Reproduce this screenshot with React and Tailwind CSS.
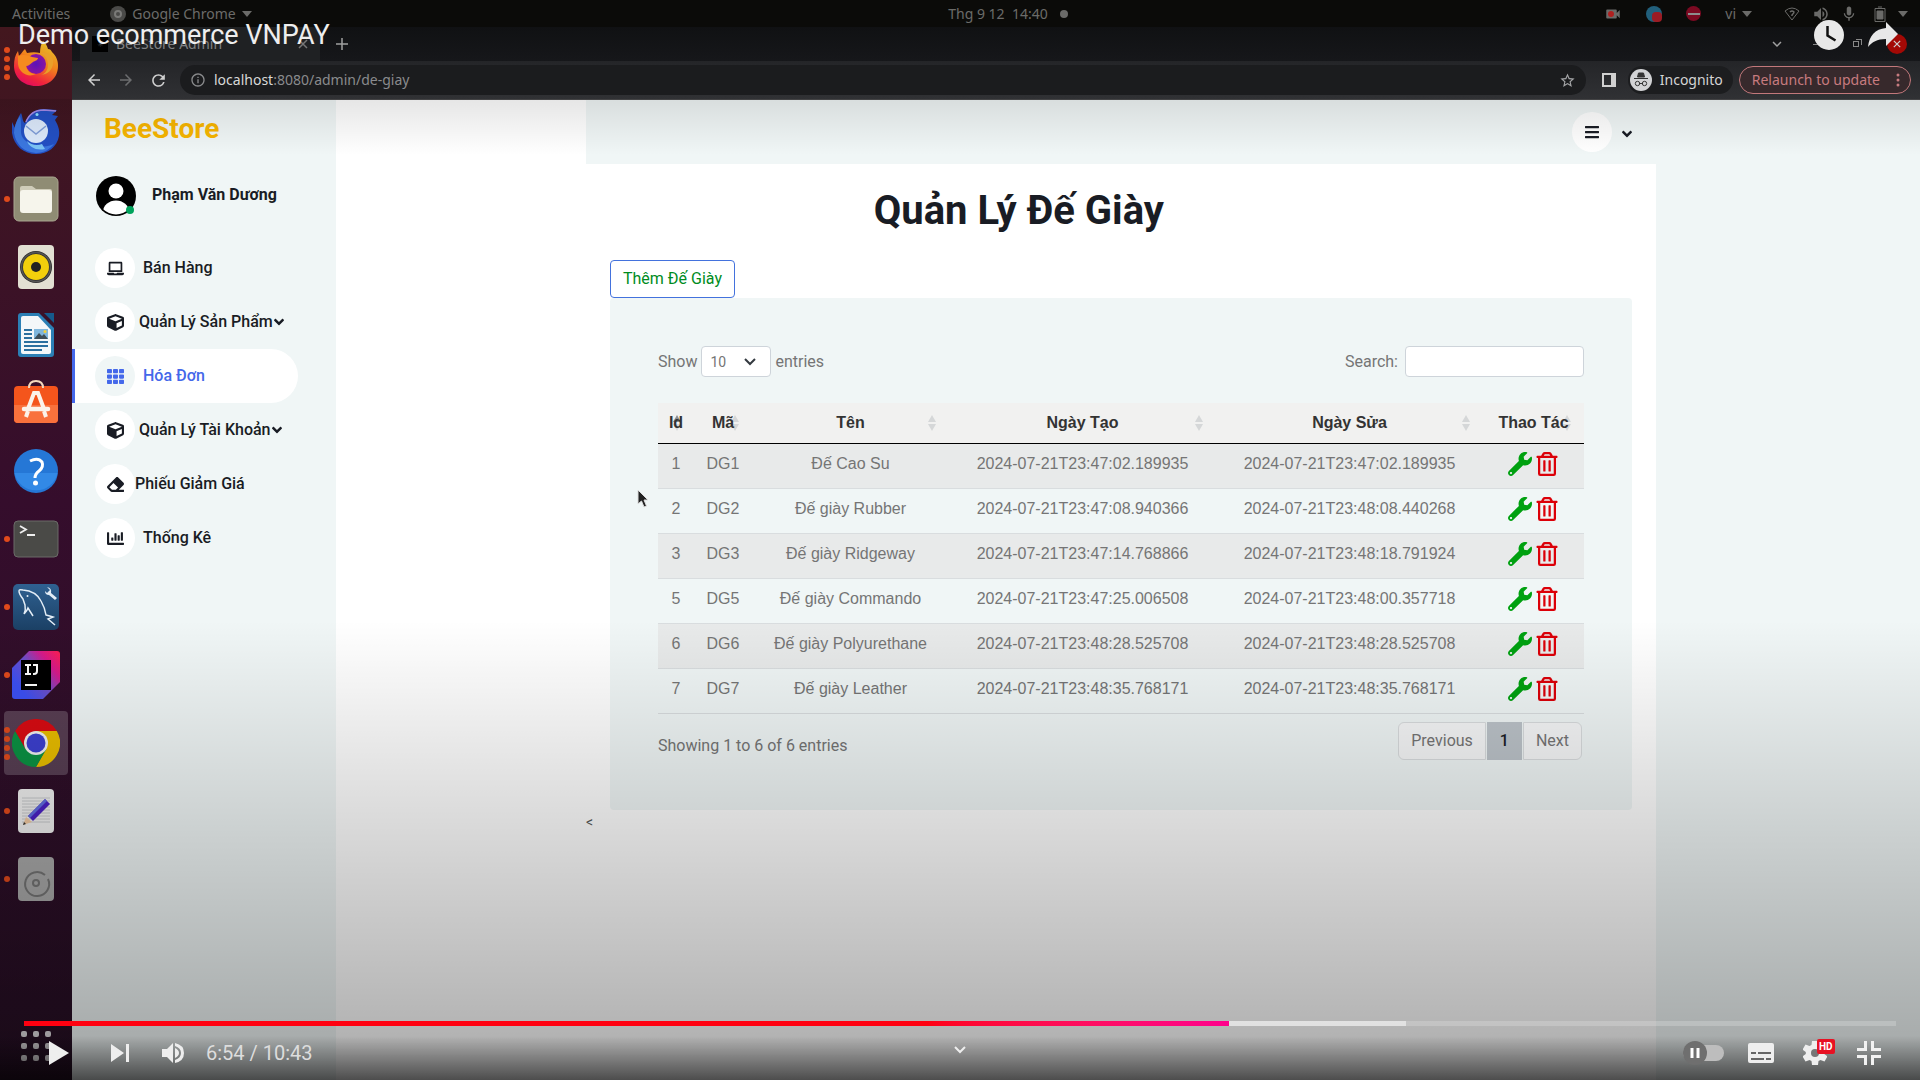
import React from "react";
import {
  FaLaptop,
  FaCube,
  FaTh,
  FaEraser,
  FaChartBar,
  FaBars,
  FaWrench,
  FaRegTrashAlt,
  FaAngleDown,
} from "react-icons/fa";
import { MdArrowBack, MdArrowForward, MdRefresh, MdStarBorder, MdInfoOutline, MdKeyboardArrowDown, MdMic, MdVolumeUp, MdVideocam } from "react-icons/md";

const ROWS = [
  ["1", "DG1", "Đế Cao Su", "2024-07-21T23:47:02.189935", "2024-07-21T23:47:02.189935"],
  ["2", "DG2", "Đế giày Rubber", "2024-07-21T23:47:08.940366", "2024-07-21T23:48:08.440268"],
  ["3", "DG3", "Đế giày Ridgeway", "2024-07-21T23:47:14.768866", "2024-07-21T23:48:18.791924"],
  ["5", "DG5", "Đế giày Commando", "2024-07-21T23:47:25.006508", "2024-07-21T23:48:00.357718"],
  ["6", "DG6", "Đế giày Polyurethane", "2024-07-21T23:48:28.525708", "2024-07-21T23:48:28.525708"],
  ["7", "DG7", "Đế giày Leather", "2024-07-21T23:48:35.768171", "2024-07-21T23:48:35.768171"],
];

const COLUMNS = [
  { label: "Id", width: "w-[36px]" },
  { label: "Mã", width: "w-[58px]" },
  { label: "Tên", width: "w-[197px]" },
  { label: "Ngày Tạo", width: "w-[267px]" },
  { label: "Ngày Sửa", width: "w-[267px]" },
  { label: "Thao Tác", width: "w-[101px]" },
];

/* ---------- dock icons ---------- */

function Firefox() {
  return (
    <svg viewBox="0 0 48 48" className="size-12">
      <defs>
        <linearGradient id="ffBody" x1="0.8" y1="0" x2="0.3" y2="1">
          <stop offset="0" stopColor="#e6c52a" />
          <stop offset="0.45" stopColor="#f0821c" />
          <stop offset="0.8" stopColor="#f0243c" />
          <stop offset="1" stopColor="#e00a60" />
        </linearGradient>
        <radialGradient id="ffCore">
          <stop offset="0" stopColor="#5b12b8" />
          <stop offset="1" stopColor="#8a14a0" />
        </radialGradient>
      </defs>
      <path d="M31 2c3 2 4 5 5 8 2 0 3 1 4 3 4 4 6 8 6 14 0 12-9 20-22 20S2 38 2 27c0-6 1-11 4-15l1 5c2-2 3-4 6-7l2 4c5-1 9-1 13 0 0-5 1-9 3-12z" fill="url(#ffBody)" />
      <circle cx="24" cy="25" r="10" fill="url(#ffCore)" />
      <path d="M6 17c6-2 10-1 14 1l6 1c0 2-3 3-5 4-3 2-4 4-7 4 1 4 4 8 10 8-8 4-17-1-18-10z" fill="#f58a1f" />
      <path d="M28 14c5 2 8 6 8 12 0 5-3 9-7 10 9-1 13-8 12-15-1-5-6-8-13-7z" fill="#e9a02a" />
    </svg>
  );
}

function Thunderbird() {
  return (
    <svg viewBox="0 0 48 48" className="size-12">
      <path d="M9 6c2 4 1 8 4 10 3-8 9-14 19-14l13 1-5 5 6 1-3 4c3 5 5 10 4 16-2 11-11 18-23 18S2 39 0 26V15l3 6c1-6 3-11 6-15z" fill="#2350c4" />
      <path d="M2 26c2 12 10 19 22 20 8 0 14-4 18-9-7 3-14 4-21 1S8 31 9 22c0-5 0-10-1-13-4 5-6 11-6 17z" fill="#3b77e0" />
      <path d="M14 15c3-8 9-12 18-12l12 1" fill="none" stroke="#a58ae8" strokeWidth="1.5" />
      <circle cx="24" cy="24" r="12" fill="#dce9fb" />
      <path d="M14 19l10 8 10-8" fill="none" stroke="#7f9dd8" strokeWidth="1.5" />
      <path d="M15 34c4 4 10 5 15 3l3 5c-9 2-16-2-18-8z" fill="#7cc4f5" />
      <circle cx="25" cy="7.500" r="1.500" fill="#8fe3ff" />
    </svg>
  );
}

function Files() {
  return (
    <svg viewBox="0 0 48 48" className="size-12">
      <rect x="2" y="2" width="44" height="44" rx="5" fill="#8f8c74" stroke="#a9a690" />
      <path d="M8 13q0-2 2-2h10l4 3h14q2 0 2 2v4H8z" fill="#cfccb9" />
      <rect x="8" y="15" width="32" height="23" rx="3" fill="#f6f5ec" />
    </svg>
  );
}

function Rhythmbox() {
  return (
    <svg viewBox="0 0 48 48" className="size-12">
      <rect x="6" y="2" width="36" height="44" rx="4" fill="#e2e0d3" />
      <circle cx="24" cy="24" r="16" fill="#2f2f2f" />
      <circle cx="24" cy="24" r="13" fill="#f2cf0c" />
      <circle cx="24" cy="24" r="5" fill="#222" />
      <circle cx="24" cy="24" r="14.500" fill="none" stroke="#555" strokeWidth="1.500" />
    </svg>
  );
}

function Writer() {
  return (
    <svg viewBox="0 0 48 48" className="size-12">
      <path d="M6 5q0-3 3-3h18l15 15v26q0 3-3 3H9q-3 0-3-3z" fill="#2b7fb5" />
      <path d="M32 2h10v10z" fill="#155a8c" />
      <path d="M9 7q0-2 2-2h15l13 14v22q0 2-2 2H11q-2 0-2-2z" fill="#f4f7f9" />
      <path d="M12 19h8M12 23h8M12 27h8M12 31h24M12 35h24M12 39h18" stroke="#2b6f9f" strokeWidth="2" />
      <rect x="22" y="18" width="14" height="10" fill="#7fb6dc" />
      <path d="M22 28l5-6 3 3 2-2 4 5z" fill="#3d4e58" />
      <circle cx="33" cy="20.500" r="1.500" fill="#f2d13a" />
    </svg>
  );
}

function Software() {
  return (
    <svg viewBox="0 0 48 48" className="size-12">
      <rect x="2" y="7" width="44" height="37" rx="4" fill="#f4551c" />
      <path d="M2 26h44v14q0 4-4 4H6q-4 0-4-4z" fill="#f9713c" />
      <path d="M17 9q0-7 7-7t7 7" fill="none" stroke="#f4d9bd" strokeWidth="2" />
      <path d="M16 30l6-16h4l6 16" fill="none" stroke="#fbf3ea" strokeWidth="4" />
      <path d="M12 30h24" stroke="#fbf3ea" strokeWidth="4.500" strokeLinecap="round" />
      <path d="M16 32l-2 6M32 32l2 6" stroke="#fbf3ea" strokeWidth="4" />
    </svg>
  );
}

function Help() {
  return (
    <svg viewBox="0 0 48 48" className="size-12">
      <circle cx="24" cy="24" r="22" fill="#2577d6" />
      <path d="M2.500 26h43A22 22 0 0 1 2.500 26z" fill="#3289e6" />
      <path d="M18 14q8-4 12 1 2 5-3 9-4 3-4 7" fill="none" stroke="#fff" strokeWidth="3" />
      <circle cx="23.500" cy="36" r="2.500" fill="#fff" />
    </svg>
  );
}

function Terminal() {
  return (
    <svg viewBox="0 0 48 48" className="size-12">
      <rect x="2" y="6" width="44" height="36" rx="4" fill="#4a4a47" stroke="#6b6b68" />
      <path d="M8 11l6 3.500-6 3.500M15 20h8" fill="none" stroke="#eee" strokeWidth="1.800" />
    </svg>
  );
}

function Workbench() {
  return (
    <svg viewBox="0 0 48 48" className="size-12">
      <defs>
        <linearGradient id="wb" x1="0" y1="0" x2="0" y2="1">
          <stop offset="0" stopColor="#2f6191" />
          <stop offset="1" stopColor="#1b4065" />
        </linearGradient>
      </defs>
      <rect x="1" y="1" width="46" height="46" rx="5" fill="url(#wb)" />
      <path d="M12 31q2-4 1-9-1-3-2-6-4-5-4-8 0-2 4-1 13 1 18 11 4 7 5 14 4 1 7 2l-5 2 7 6M12 31q3-3 4-6l5 8" fill="none" stroke="#e3edf6" strokeWidth="1.500" />
      <circle cx="15.500" cy="13" r="1" fill="#e3edf6" />
      <path d="M35 4l3 3-3 3-2-2q0 4 4 4l6 5 2-2-6-5q1-5-4-6z" fill="#e3edf6" />
    </svg>
  );
}

function Idea() {
  return (
    <svg viewBox="0 0 48 48" className="size-12">
      <defs>
        <linearGradient id="ij" x1="1" y1="0" x2="0.100" y2="0.700">
          <stop offset="0" stopColor="#ff1e50" />
          <stop offset="0.300" stopColor="#d41a8c" />
          <stop offset="0.600" stopColor="#6d4fc8" />
          <stop offset="1" stopColor="#3c50f5" />
        </linearGradient>
      </defs>
      <path d="M17 0h28q3 0 3 3v28L31 48H3q-3 0-3-3V17z" fill="url(#ij)" />
      <rect x="9" y="9" width="30" height="30" fill="#000" />
      <path d="M13 14h6M16 14v9M13 23h6M21 14h4v6q0 3-3 3h-1M13 34h12" fill="none" stroke="#fff" strokeWidth="2" />
    </svg>
  );
}

function Chrome() {
  return (
    <svg viewBox="0 0 48 48" className="size-12">
      <path d="M24 12h20.800A24 24 0 0 1 24 48l10-18z" fill="#e9bd00" />
      <path d="M3.200 12A24 24 0 0 0 24 48l10.400-18L24 24 13.600 30z" fill="#0b9243" />
      <path d="M3.200 12A24 24 0 0 1 44.800 12H24L13.600 30z" fill="#d90b12" />
      <circle cx="24" cy="24" r="12" fill="#f0f0f0" />
      <circle cx="24" cy="24" r="9.500" fill="#3c40d0" />
    </svg>
  );
}

function Editor() {
  return (
    <svg viewBox="0 0 48 48" className="size-12">
      <rect x="6" y="2" width="36" height="44" rx="4" fill="#efefef" />
      <path d="M10 11h28M10 14h28M10 17h28M10 20h28M10 23h28M10 26h28M10 29h28M10 32h28M10 35h28" stroke="#c6c8ca" />
      <path d="M11 38l3-8 6 5z" fill="#f0c8a0" />
      <path d="M11 38l1-3 2 2z" fill="#333" />
      <path d="M16 29l17-17 5 5L21 34z" fill="#4a20c4" />
      <path d="M16 29l17-17 2 2-17 17z" fill="#5f6ce0" />
    </svg>
  );
}

function Disk() {
  return (
    <svg viewBox="0 0 48 48" className="size-12">
      <rect x="6" y="2" width="36" height="44" rx="4" fill="#a9a9a9" />
      <path d="M33 20A12 12 0 1 0 36 24" fill="none" stroke="#747474" strokeWidth="2" />
      <circle cx="24" cy="28" r="3" fill="none" stroke="#747474" strokeWidth="2" />
    </svg>
  );
}

const DOCK = [
  { name: "Firefox", Icon: Firefox, dots: 4 },
  { name: "Thunderbird", Icon: Thunderbird, dots: 0 },
  { name: "Files", Icon: Files, dots: 1 },
  { name: "Rhythmbox", Icon: Rhythmbox, dots: 0 },
  { name: "LibreOffice Writer", Icon: Writer, dots: 0 },
  { name: "Ubuntu Software", Icon: Software, dots: 0 },
  { name: "Help", Icon: Help, dots: 0 },
  { name: "Terminal", Icon: Terminal, dots: 1 },
  { name: "MySQL Workbench", Icon: Workbench, dots: 1 },
  { name: "IntelliJ IDEA", Icon: Idea, dots: 1 },
  { name: "Google Chrome", Icon: Chrome, dots: 4, active: true },
  { name: "Text Editor", Icon: Editor, dots: 1 },
  { name: "Disks", Icon: Disk, dots: 1 },
];

function Dock() {
  return (
    <aside className="flex w-[72px] shrink-0 flex-col bg-linear-to-b from-[#43171e] via-[#350d2c] via-45% to-[#260f24] pt-0.5">
      {DOCK.map(({ name, Icon, dots, active }) => (
        <div key={name} className="flex h-[68px] shrink-0 items-center">
          <div className={active ? "relative ml-1 flex size-16 items-center justify-center rounded bg-white/20" : "relative ml-1 flex size-16 items-center justify-center"}>
            <div className="absolute left-0 flex flex-col gap-[3px]">
              {Array.from({ length: dots }, (_, i) => (
                <span key={i} className="size-1.5 rounded-full bg-[#e04a1c]" />
              ))}
            </div>
            <button type="button" aria-label={name}>
              <Icon />
            </button>
          </div>
        </div>
      ))}
      <button type="button" aria-label="Show Applications" className="mt-auto mb-[19px] ml-[21px] grid w-[30px] grid-cols-3 gap-1.5">
        {Array.from({ length: 9 }, (_, i) => (
          <span key={i} className="size-1.5 rounded-xs bg-[#e0dce0]" />
        ))}
      </button>
    </aside>
  );
}

/* ---------- desktop bar and browser chrome ---------- */

function Caret() {
  return (
    <svg viewBox="0 0 10 6" className="ml-1.5 h-1.5 w-2.5" fill="currentColor"><path d="M0 0h10L5 6z" /></svg>
  );
}

function TopBar() {
  return (
    <header className="grid h-[27px] shrink-0 grid-cols-3 items-center bg-[#0b0b09] px-3 font-['Noto_Sans',sans-serif] text-sm text-[#6b6b69]">
      <div className="flex items-center">
        <span>Activities</span>
        <span className="ml-10 flex size-4 items-center justify-center rounded-full bg-[#4a4a48]">
          <span className="size-2 rounded-full border-2 border-[#7a7a78]" />
        </span>
        <span className="ml-1.5">Google Chrome</span>
        <Caret />
      </div>
      <div className="flex items-center justify-center gap-3 pl-24">
        <span className="whitespace-pre">Thg 9 12  14:40</span>
        <span className="size-2 rounded-full bg-[#6b6b69]" />
      </div>
      <div className="flex items-center justify-end">
        <span className="relative flex text-[#6b6b69]">
          <MdVideocam size={18} />
          <span className="absolute top-1.5 left-1 size-1.5 rounded-full bg-[#b02020]" />
        </span>
        <span className="relative ml-6 size-4 rounded-full bg-[#22607c]">
          <span className="absolute top-1.5 left-1.5 size-2.5 rounded-sm bg-[#9c1c24]" />
        </span>
        <span className="ml-6 flex size-[15px] items-center justify-center rounded-full bg-[#7c0a22]">
          <span className="h-0.5 w-3 bg-[#8d8d8d]" />
        </span>
        <span className="ml-6">vi</span>
        <Caret />
        <svg viewBox="0 0 16 14" className="ml-8 h-3.5 w-4" fill="none" stroke="currentColor">
          <path d="M1 4q7-6 14 0L8 13z" />
          <path d="M6 5q2-2 4 0 0 1-2 3v1" strokeWidth="1.500" />
        </svg>
        <MdVolumeUp size={18} className="ml-3" />
        <MdMic size={18} className="ml-2.5" />
        <svg viewBox="0 0 12 16" className="mr-1.5 ml-4 h-4 w-3" fill="none" stroke="currentColor">
          <path d="M1 2.500h10v13H1zM4 1h4" />
          <path d="M3 5h6v8H3z" fill="currentColor" />
        </svg>
        <Caret />
      </div>
    </header>
  );
}

function TabStrip() {
  return (
    <div className="flex h-[34px] shrink-0 bg-linear-to-b from-[#101113] to-[#16171a] font-['Noto_Sans',sans-serif]">
      <div className="ml-2 flex w-[240px] items-center rounded-t-lg bg-[#1f2123] px-3 text-sm text-[#808184]">
        <span className="flex size-4 items-center justify-center bg-black text-[8px] text-[#444]">✳</span>
        <span className="ml-2">BeeStore Admin</span>
        <button type="button" aria-label="Close tab" className="ml-auto">
          <svg viewBox="0 0 10 10" className="size-2.5" stroke="#777" strokeWidth="1.500"><path d="M1 1l8 8M9 1L1 9" /></svg>
        </button>
      </div>
      <button type="button" aria-label="New tab" className="ml-4">
        <svg viewBox="0 0 12 12" className="size-3" stroke="#a0a0a0" strokeWidth="1.500"><path d="M6 0v12M0 6h12" /></svg>
      </button>
      <div className="ml-auto flex items-center pr-[13px]">
        <MdKeyboardArrowDown size={18} className="text-[#a0a0a0]" />
        <span className="ml-[27px] h-px w-2 bg-[#888]" />
        <span className="relative ml-8 size-1.5 border border-[#888]">
          <span className="absolute -top-[3px] left-0.5 size-1.5 border-t border-r border-[#888]" />
        </span>
        <button type="button" aria-label="Close window" className="ml-7 flex size-5 items-center justify-center rounded-full bg-[#a30905]">
          <svg viewBox="0 0 10 10" className="size-2" stroke="#cfcfcf" strokeWidth="1.500"><path d="M1 1l8 8M9 1L1 9" /></svg>
        </button>
      </div>
    </div>
  );
}

function Toolbar() {
  return (
    <div className="flex h-[39px] shrink-0 items-center border-b border-[#4a4a4c] bg-linear-to-b from-[#242528] to-[#303134] font-['Noto_Sans',sans-serif] text-sm">
      <button type="button" aria-label="Back" className="ml-[13px] text-[#d0d0d0]"><MdArrowBack size={18} /></button>
      <button type="button" aria-label="Forward" className="ml-3.5 text-[#6c6d6f]"><MdArrowForward size={18} /></button>
      <button type="button" aria-label="Reload" className="ml-3.5 text-[#d0d0d0]"><MdRefresh size={19} /></button>
      <div className="ml-3 flex h-[30px] flex-1 items-center rounded-full bg-[#1b1c1e] px-2.5">
        <MdInfoOutline size={16} className="text-[#8a8b8d]" />
        <div className="ml-2 text-[#8a8b8d]"><span className="text-[#d8d8d8]">localhost</span>:8080/admin/de-giay</div>
        <MdStarBorder size={17} className="ml-auto text-[#a4a5a7]" />
      </div>
      <button type="button" aria-label="Side panel" className="ml-4 size-3.5 border-2 border-r-[5px] border-[#d0d0d0]" />
      <div className="ml-3 flex h-7 items-center rounded-full bg-[#1c1d1f] pr-2.5 pl-0.5 text-[#d4d4d4]">
        <svg viewBox="0 0 22 22" className="size-[22px]">
          <circle cx="11" cy="11" r="11" fill="#d2d3d5" />
          <path d="M4 9.500h14M7.500 8l1-4h5l1 4z" fill="#333" stroke="#333" />
          <path d="M9 14.500h4" stroke="#333" />
          <circle cx="7.500" cy="14.500" r="2.200" fill="none" stroke="#333" />
          <circle cx="14.500" cy="14.500" r="2.200" fill="none" stroke="#333" />
        </svg>
        <span className="ml-2">Incognito</span>
      </div>
      <button type="button" className="mr-[9px] ml-1.5 flex h-7 items-center rounded-full border border-[#c2787b] bg-[#37292c] pr-2.5 pl-3 text-[#c77b7f]">
        Relaunch to update
        <svg viewBox="0 0 4 14" className="ml-4 h-3.5 w-1" fill="#c77b7f">
          <circle cx="2" cy="2" r="1.500" /><circle cx="2" cy="7" r="1.500" /><circle cx="2" cy="12" r="1.500" />
        </svg>
      </button>
    </div>
  );
}

/* ---------- admin page ---------- */

const MENU = [
  { label: "Bán Hàng", Icon: FaLaptop, gap: "ml-2" },
  { label: "Quản Lý Sản Phẩm", Icon: FaCube, gap: "ml-1", more: true },
  { label: "Hóa Đơn", Icon: FaTh, gap: "ml-2", active: true },
  { label: "Quản Lý Tài Khoản", Icon: FaCube, gap: "ml-1", more: true },
  { label: "Phiếu Giảm Giá", Icon: FaEraser, gap: "ml-0" },
  { label: "Thống Kê", Icon: FaChartBar, gap: "ml-2" },
];

function Sidebar() {
  return (
    <aside className="w-[264px] shrink-0 bg-[#f0f6f6] text-[#191c24]">
      <a href="#home" className="mt-[11px] ml-8 block text-[28px] leading-9 font-bold text-[#f7b500]">BeeStore</a>
      <div className="mt-[29px] ml-6 flex items-center">
        <div className="relative size-10">
          <svg viewBox="0 0 40 40" className="size-10">
            <clipPath id="face"><circle cx="20" cy="20" r="18.500" /></clipPath>
            <circle cx="20" cy="20" r="20" fill="#000" />
            <circle cx="20" cy="15" r="7.500" fill="#fff" />
            <ellipse cx="20" cy="36" rx="13" ry="11.500" fill="#fff" clipPath="url(#face)" />
          </svg>
          <span className="absolute right-0.5 bottom-0.5 size-2 rounded-full bg-[#00a35c]" />
        </div>
        <span className="ml-4 pb-0.5 font-bold">Phạm Văn Dương</span>
      </div>
      <nav className="mt-[25px]">
        {MENU.map(({ label, Icon, gap, more, active }) => (
          <a
            key={label}
            href={"#" + label}
            className={
              active
                ? "mr-[38px] flex h-[54px] items-center rounded-r-full border-l-[3px] border-[#4468ea] bg-white pl-5 font-medium text-[#4468ea]"
                : "mr-[38px] flex h-[54px] items-center border-l-[3px] border-transparent pl-5 font-medium"
            }
          >
            <span className={active ? "flex size-10 shrink-0 items-center justify-center rounded-full bg-[#f0f6f6]" : "flex size-10 shrink-0 items-center justify-center rounded-full bg-white"}>
              <Icon size={17} />
            </span>
            <span className={gap + " whitespace-nowrap"}>{label}</span>
            {more && <FaAngleDown size={16} className="-ml-0.5 shrink-0" />}
          </a>
        ))}
      </nav>
    </aside>
  );
}

function SortArrows({ dark }) {
  return (
    <svg viewBox="0 0 8 16" className="absolute top-1/2 right-[13px] h-4 w-2 -translate-y-1/2">
      <path d="M4 0l4 7H0z" fill={dark ? "#8a8c90" : "#d5d7d8"} />
      <path d="M4 16l4-7H0z" fill="#d5d7d8" />
    </svg>
  );
}

function DataCard() {
  return (
    <section className="rounded bg-[#f0f6f6] px-12 pt-12 pb-[50px] text-[#757575]">
      <div className="flex items-center justify-between">
        <div className="flex items-center gap-1">
          <label htmlFor="length">Show</label>
          <div className="relative">
            <select id="length" defaultValue="10" className="h-[31px] w-[70px] appearance-none rounded border border-[#ced4da] bg-white pl-2 text-sm">
              <option>10</option>
              <option>25</option>
            </select>
            <svg viewBox="0 0 12 8" className="pointer-events-none absolute top-3 right-[15px] h-2 w-3" fill="none" stroke="#343a40" strokeWidth="2"><path d="M1 1l5 5 5-5" /></svg>
          </div>
          <span>entries</span>
        </div>
        <div className="flex items-center gap-[7px]">
          <label htmlFor="search">Search:</label>
          <input id="search" type="search" className="h-[31px] w-[179px] rounded border border-[#ced4da] bg-white px-2" />
        </div>
      </div>

      <table className="mt-[26px] w-full table-fixed border-collapse text-center font-['Liberation_Sans',Arial,sans-serif]">
        <thead>
          <tr className="h-10 border-b border-black bg-[#f1f1f0] text-[#333]">
            {COLUMNS.map(({ label, width }, i) => (
              <th key={label} scope="col" className={width + " relative p-0 font-bold whitespace-nowrap"}>
                <SortArrows dark={i === 0} />
                <span className="relative">{label}</span>
              </th>
            ))}
          </tr>
        </thead>
        <tbody>
          {ROWS.map((row) => (
            <tr key={row[0]} className="h-[45px] border-b border-[#d9dddf] align-top odd:bg-[#e8eaea]">
              {row.map((cell, i) => (
                <td key={i} className="px-0 py-2 leading-6 whitespace-nowrap">{cell}</td>
              ))}
              <td className="px-0 py-2">
                <div className="flex justify-center gap-[3px]">
                  <button type="button" aria-label={"Sửa " + row[2]} className="text-[#00a110]"><FaWrench size={24} /></button>
                  <button type="button" aria-label={"Xóa " + row[2]} className="text-[#dc0008]"><FaRegTrashAlt size={24} /></button>
                </div>
              </td>
            </tr>
          ))}
        </tbody>
      </table>

      <div className="mt-2 flex items-start justify-between pr-0.5">
        <p className="pt-3">Showing 1 to 6 of 6 entries</p>
        <div className="flex h-[38px] gap-px">
          <button type="button" className="rounded-l-md border border-[#d9dcde] bg-[#f6f7f8] px-3">Previous</button>
          <button type="button" className="border border-[#bcc3c9] bg-[#bcc3c9] px-3 font-medium text-[#191c24]">1</button>
          <button type="button" className="rounded-r-md border border-[#d9dcde] bg-[#f6f7f8] px-3">Next</button>
        </div>
      </div>
    </section>
  );
}

function AdminPage() {
  return (
    <div className="flex min-h-0 flex-1 bg-[#f0f6f6] font-[Roboto,sans-serif] text-base">
      <Sidebar />
      <div className="w-[250px] shrink-0 bg-white" />
      <div className="flex min-w-0 flex-1 flex-col">
        <div className="flex h-16 shrink-0 items-center justify-end pr-[285px] text-[#191c24]">
          <button type="button" aria-label="Menu" className="flex size-10 items-center justify-center rounded-full bg-white"><FaBars size={16} /></button>
          <button type="button" aria-label="Account" className="ml-[7px] pt-1"><FaAngleDown size={16} /></button>
        </div>
        <main className="mr-[264px] flex-1 bg-white px-6 pt-[23px]">
          <h1 className="w-4/5 text-center text-[40px] leading-[48px] font-bold text-[#191c24]">Quản Lý Đế Giày</h1>
          <button type="button" className="mt-[25px] block h-[38px] rounded border border-[#4372dd] bg-white px-3 text-[#008c1e]">Thêm Đế Giày</button>
          <DataCard />
          <span className="-ml-6 block pt-0.5 text-sm text-[#555]">&lt;</span>
        </main>
      </div>
    </div>
  );
}

/* ---------- video player overlay ---------- */

function PlayerOverlay() {
  return (
    <div className="absolute inset-0 flex flex-col justify-between font-[Roboto,sans-serif] text-[#eee]">
      <div className="pointer-events-none absolute inset-x-0 top-[99px] h-14 bg-linear-to-b from-black/10 to-transparent" />
      <div className="pointer-events-none absolute inset-x-0 bottom-0 h-[460px] bg-linear-to-b from-transparent via-black/14 via-42% to-black/33" />
      <div className="pointer-events-none absolute inset-x-0 bottom-0 h-11 bg-linear-to-b from-transparent to-black/55" />

      <div className="relative flex items-start justify-between pt-[17px] pr-[22px] pl-[18px]">
        <h2 className="text-[27px] leading-9">Demo ecommerce VNPAY</h2>
        <div className="flex items-center gap-6 pt-[3px]">
          <button type="button" aria-label="Watch later">
            <svg viewBox="0 0 30 30" className="size-[30px]">
              <circle cx="15" cy="15" r="15" fill="#e8e8e8" />
              <path d="M13.500 6v9.500l8 5" fill="none" stroke="#111" strokeWidth="2.500" />
            </svg>
          </button>
          <button type="button" aria-label="Share">
            <svg viewBox="0 0 30 26" className="h-[26px] w-[30px]"><path d="M18 0l12 12-12 12v-7C9 17 4 20 0 25 1 14 7 7 18 6z" fill="#e8e8e8" /></svg>
          </button>
        </div>
      </div>

      <div className="relative">
        <div className="mx-6 h-[5px] bg-white/20" role="progressbar" aria-label="Playback" aria-valuenow={64}>
          <div className="h-[5px] w-[73.8%] bg-white/50">
            <div className="h-[5px] w-[87.2%] bg-linear-to-r from-[#ff0010] from-75% to-[#ff008c]" />
          </div>
        </div>
        <div className="grid h-[54px] grid-cols-3 items-center px-12">
          <div className="flex items-center">
            <button type="button" aria-label="Play"><svg viewBox="0 0 22 24" className="h-6 w-[22px]" fill="#eee"><path d="M1 0l20 12L1 24z" /></svg></button>
            <button type="button" aria-label="Next" className="ml-10"><svg viewBox="0 0 20 20" className="size-5" fill="#eee"><path d="M1 1l13 9-13 9zM16 1h3v18h-3z" /></svg></button>
            <button type="button" aria-label="Mute" className="ml-8">
              <svg viewBox="0 0 22 22" className="size-[22px]" fill="#eee"><path d="M0 7h5l6-6v20l-6-6H0zM13 6q4 2 4 5t-4 5zM13 1q9 2 9 10t-9 10v-3q6-2 6-7t-6-7z" /></svg>
            </button>
            <span className="ml-[22px] text-xl text-[#ddd]">6:54 / 10:43</span>
          </div>
          <button type="button" aria-label="More videos" className="mx-auto mb-1.5"><svg viewBox="0 0 12 8" className="h-2 w-3" fill="none" stroke="#eee" strokeWidth="2"><path d="M1 1l5 5 5-5" /></svg></button>
          <div className="-mr-[9px] flex items-center justify-end">
            <button type="button" aria-label="Autoplay" className="flex h-4 w-[41px] items-center rounded-full bg-[#bdbdbd]">
              <svg viewBox="0 0 24 24" className="size-6"><circle cx="12" cy="12" r="12" fill="#6f6f6f" /><path d="M9 7v10M15 7v10" stroke="#fff" strokeWidth="3" /></svg>
            </button>
            <button type="button" aria-label="Subtitles" className="ml-6">
              <svg viewBox="0 0 26 20" className="h-5 w-[26px]"><rect width="26" height="20" rx="2" fill="#eee" /><path d="M3 10h5M10 10h13M3 16h13M18 16h5" stroke="#666" strokeWidth="2" /></svg>
            </button>
            <button type="button" aria-label="Settings" className="relative ml-[29px]">
              <svg viewBox="0 0 24 24" className="size-6">
                <path d="M9 0h6l.5 4 2 1 4-1.500 3 5-3.300 2.500v2l3.300 2.500-3 5-4-1.500-2 1L15 24H9l-.5-4-2-1-4 1.500-3-5L2.800 13v-2L-.5 8.500l3-5 4 1.500 2-1z" fill="#eee" />
                <circle cx="12" cy="12" r="4" fill="#777" />
              </svg>
              <span className="absolute -top-0.5 left-3.5 rounded-xs bg-[#e81123] px-0.5 text-[10px] leading-[15px] font-bold text-white">HD</span>
            </button>
            <button type="button" aria-label="Exit full screen" className="ml-[30px]">
              <svg viewBox="0 0 24 24" className="size-6" fill="none" stroke="#f2f2f2" strokeWidth="3"><path d="M0 8.500h8.500V0M24 8.500h-8.500V0M0 15.500h8.500V24M24 15.500h-8.500V24" /></svg>
            </button>
          </div>
        </div>
      </div>
    </div>
  );
}

function Pointer() {
  return (
    <svg viewBox="0 0 12 19" className="absolute top-[489px] left-[637px] h-[19px] w-3"><path d="M1 1v14l3.500-3 2.500 6 2.500-1-2.500-6H11z" fill="#222" stroke="#ddd" /></svg>
  );
}

export default function App() {
  return (
    <div className="relative flex h-screen flex-col overflow-hidden bg-black">
      <TopBar />
      <div className="flex min-h-0 flex-1">
        <Dock />
        <div className="flex min-w-0 flex-1 flex-col">
          <TabStrip />
          <Toolbar />
          <AdminPage />
        </div>
      </div>
      <Pointer />
      <PlayerOverlay />
    </div>
  );
}
